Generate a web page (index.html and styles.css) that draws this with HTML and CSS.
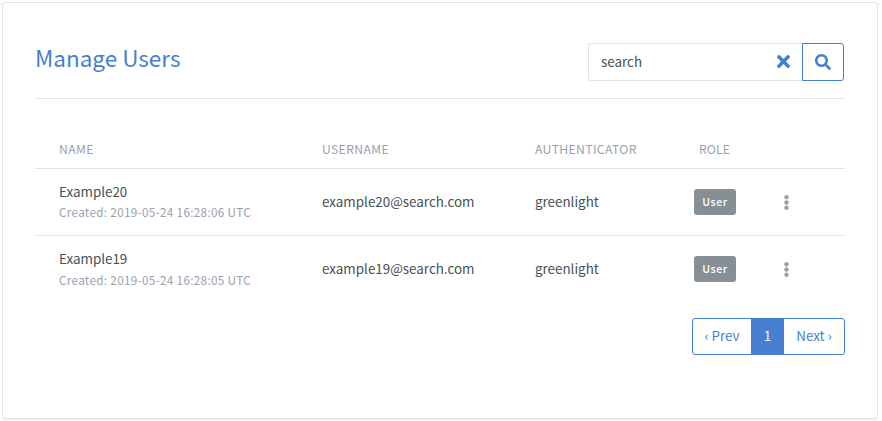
FILE: index.html
```html
<!DOCTYPE html>
<html lang="en">
<head>
<meta charset="utf-8">
<title>Manage Users</title>
<link rel="stylesheet" href="styles.css">
</head>
<body>
<main class="card">
  <header class="card-header">
    <h1 class="title">Manage Users</h1>
    <div class="search">
      <div class="search-field">
        <span class="search-text">search</span>
        <svg class="clear-icon" viewBox="0 0 352 512"><path d="M242.72 256l100.07-100.07c12.28-12.28 12.28-32.19 0-44.48l-22.24-22.24c-12.28-12.28-32.19-12.28-44.48 0L176 189.28 75.93 89.21c-12.28-12.28-32.19-12.28-44.48 0L9.21 111.45c-12.28 12.28-12.28 32.19 0 44.48L109.28 256 9.21 356.07c-12.28 12.28-12.28 32.19 0 44.48l22.24 22.24c12.28 12.28 32.2 12.28 44.48 0L176 322.72l100.07 100.07c12.28 12.28 32.2 12.28 44.48 0l22.24-22.24c12.28-12.28 12.28-32.19 0-44.48L242.72 256z"/></svg>
      </div>
      <button class="search-button" type="button" aria-label="Search">
        <svg class="search-icon" viewBox="0 0 512 512"><path d="M505 442.7L405.3 343c-4.500-4.500-10.600-7-17-7H372c27.600-35.300 44-79.700 44-128C416 93.100 322.900 0 208 0S0 93.100 0 208s93.100 208 208 208c48.300 0 92.700-16.400 128-44v16.300c0 6.400 2.500 12.500 7 17l99.700 99.700c9.400 9.400 24.600 9.400 33.900 0l28.300-28.300c9.400-9.400 9.400-24.600.1-34zM208 336c-70.700 0-128-57.200-128-128 0-70.700 57.200-128 128-128 70.700 0 128 57.200 128 128 0 70.700-57.200 128-128 128z"/></svg>
      </button>
    </div>
  </header>
  <table class="users">
    <colgroup><col class="col-name"><col class="col-username"><col class="col-auth"><col class="col-role"><col></colgroup>
    <thead>
      <tr><th>Name</th><th>Username</th><th>Authenticator</th><th class="role-head">Role</th><th></th></tr>
    </thead>
    <tbody>
      <tr>
        <td><div class="name">Example20</div><div class="created">Created: 2019-05-24 16:28:06 UTC</div></td>
        <td>example20@search.com</td>
        <td>greenlight</td>
        <td class="role"><span class="tag">User</span></td>
        <td class="actions"><svg class="dots" viewBox="0 0 5 15"><circle cx="2.5" cy="2.300" r="2.200"/><circle cx="2.5" cy="7.500" r="2.200"/><circle cx="2.5" cy="12.700" r="2.200"/></svg></td>
      </tr>
      <tr>
        <td><div class="name">Example19</div><div class="created">Created: 2019-05-24 16:28:05 UTC</div></td>
        <td>example19@search.com</td>
        <td>greenlight</td>
        <td class="role"><span class="tag">User</span></td>
        <td class="actions"><svg class="dots" viewBox="0 0 5 15"><circle cx="2.5" cy="2.300" r="2.200"/><circle cx="2.5" cy="7.500" r="2.200"/><circle cx="2.5" cy="12.700" r="2.200"/></svg></td>
      </tr>
    </tbody>
  </table>
  <nav class="pagination">
    <a class="page prev">‹ Prev</a><a class="page current">1</a><a class="page next">Next ›</a>
  </nav>
</main>
</body>
</html>
```
FILE: styles.css
```css
* { box-sizing: border-box; }

body {
  margin: 0;
  padding: 2px;
  background: #fdfdfe;
  color: #495057;
  font: 13.4px/22px "Noto Sans CJK SC", "Noto Sans", sans-serif;
}

.card {
  width: 876px;
  height: 417px;
  padding: 40px 32px 0;
  background: #fff;
  border: 1px solid #dee4eb;
  border-radius: 3px;
  box-shadow: 0 1px 2px rgba(0, 0, 0, 0.05);
}

.card-header {
  display: flex;
  justify-content: space-between;
  align-items: flex-start;
  height: 56px;
  border-bottom: 1px solid #dee4eb;
  padding-right: 1px;
}

.title {
  margin: 0;
  color: #467fcf;
  font-size: 22.500px;
  font-weight: 400;
  line-height: 28px;
}

.search { display: flex; height: 38px; }

.search-field {
  display: flex;
  align-items: center;
  justify-content: space-between;
  width: 214px;
  padding: 0 12px 2px;
  border: 1px solid #dee4eb;
  border-right: 0;
  border-radius: 3px 0 0 3px;
}

.clear-icon { width: 13px; height: 19px; fill: #467fcf; }

.search-button {
  display: flex;
  align-items: center;
  justify-content: center;
  width: 42px;
  padding: 0;
  background: #fff;
  border: 1px solid #467fcf;
  border-radius: 0 3px 3px 0;
}

.search-icon { width: 16px; height: 16px; fill: #467fcf; }

.users {
  width: 100%;
  margin-top: 31px;
  border-collapse: separate;
  border-spacing: 0;
  table-layout: fixed;
}

.col-name { width: 287px; }
.col-username { width: 213px; }
.col-auth { width: 152px; }
.col-role { width: 96px; }

th {
  height: 39px;
  padding: 0 0 1px;
  border-bottom: 1px solid #dee2e6;
  color: #9aa0ac;
  font-size: 12.200px;
  font-weight: 400;
  letter-spacing: 0.35px;
  text-align: left;
  text-transform: uppercase;
}

th:first-child, td:first-child { padding-left: 24px; }
th.role-head { padding-left: 12px; letter-spacing: 0.1px; }

td { height: 66px; padding: 0 0 2px; }
tbody tr:first-child td { height: 67px; border-bottom: 1px solid #dee2e6; }
td.role { padding: 0 0 0 7px; }
td.actions { padding: 0 0 0 0.5px; }

.name { line-height: 22px; }
.created { color: #9aa0ac; font-size: 11.700px; letter-spacing: 0.33px; line-height: 20px; }
tbody tr:last-child .created { padding-top: 1px; margin-bottom: -1px; }

.tag {
  display: block;
  width: 42px;
  height: 26px;
  border-radius: 3px;
  background: #868e96;
  color: #fff;
  font-size: 10.700px;
  font-weight: 500;
  letter-spacing: 0.5px;
  line-height: 25px;
  text-align: center;
}

.dots { display: block; width: 5px; height: 15px; fill: #9aa0ac; }

.pagination {
  display: flex;
  width: 153px;
  height: 37px;
  margin: 16px 0 0 auto;
  border: 1px solid #467fcf;
  border-radius: 3px;
  color: #467fcf;
  line-height: 33px;
  text-align: center;
}

.prev { width: 58px; }
.current { width: 33px; background: #467fcf; color: #fff; }
.next { width: 60px; }
```
